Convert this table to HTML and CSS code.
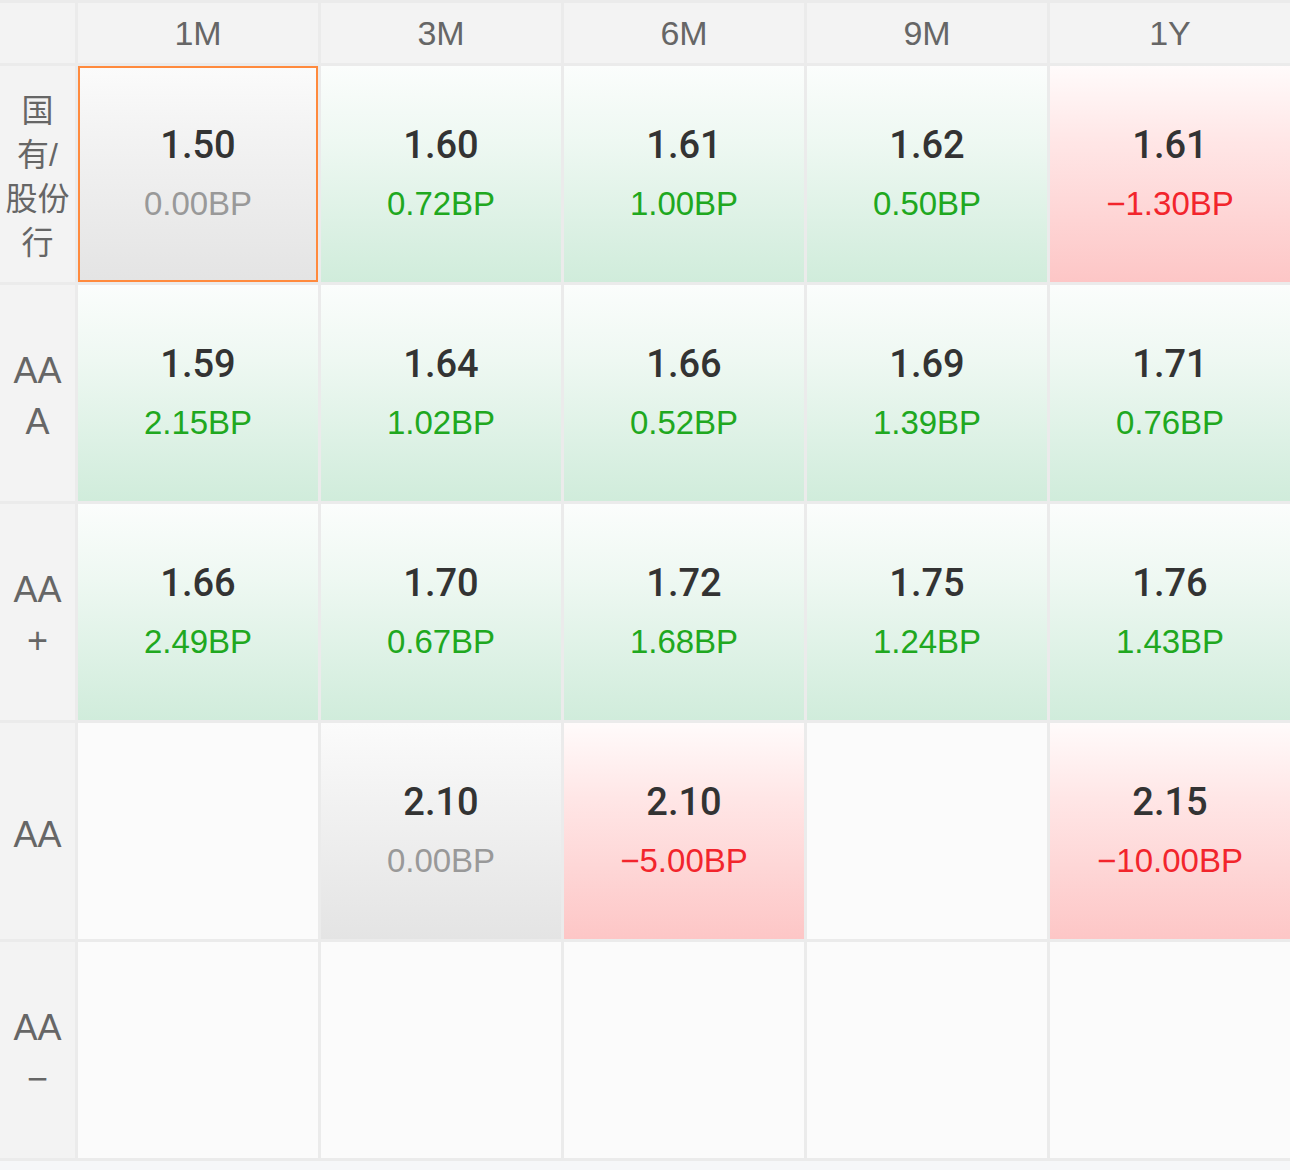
FILE: index.html
```html
<!DOCTYPE html>
<html lang="zh-CN">
  <head>
    <meta charset="UTF-8" />
    <title>收益率矩阵</title>
    <link rel="stylesheet" href="styles.css">
  </head>
  <body>
    <div class="matrix">
      <div class="corner"></div>
      <div class="col-head">1M</div>
      <div class="col-head">3M</div>
      <div class="col-head">6M</div>
      <div class="col-head">9M</div>
      <div class="col-head">1Y</div>

      <div class="row-head cjk">国<br />有/<br />股份<br />行</div>
      <div class="cell flat selected"><span class="rate">1.50</span><span class="bp">0.00BP</span></div>
      <div class="cell up"><span class="rate">1.60</span><span class="bp">0.72BP</span></div>
      <div class="cell up"><span class="rate">1.61</span><span class="bp">1.00BP</span></div>
      <div class="cell up"><span class="rate">1.62</span><span class="bp">0.50BP</span></div>
      <div class="cell down"><span class="rate">1.61</span><span class="bp">−1.30BP</span></div>

      <div class="row-head">AA<br />A</div>
      <div class="cell up"><span class="rate">1.59</span><span class="bp">2.15BP</span></div>
      <div class="cell up"><span class="rate">1.64</span><span class="bp">1.02BP</span></div>
      <div class="cell up"><span class="rate">1.66</span><span class="bp">0.52BP</span></div>
      <div class="cell up"><span class="rate">1.69</span><span class="bp">1.39BP</span></div>
      <div class="cell up"><span class="rate">1.71</span><span class="bp">0.76BP</span></div>

      <div class="row-head">AA<br />+</div>
      <div class="cell up"><span class="rate">1.66</span><span class="bp">2.49BP</span></div>
      <div class="cell up"><span class="rate">1.70</span><span class="bp">0.67BP</span></div>
      <div class="cell up"><span class="rate">1.72</span><span class="bp">1.68BP</span></div>
      <div class="cell up"><span class="rate">1.75</span><span class="bp">1.24BP</span></div>
      <div class="cell up"><span class="rate">1.76</span><span class="bp">1.43BP</span></div>

      <div class="row-head">AA</div>
      <div class="cell"></div>
      <div class="cell flat"><span class="rate">2.10</span><span class="bp">0.00BP</span></div>
      <div class="cell down"><span class="rate">2.10</span><span class="bp">−5.00BP</span></div>
      <div class="cell"></div>
      <div class="cell down"><span class="rate">2.15</span><span class="bp">−10.00BP</span></div>

      <div class="row-head">AA<br />−</div>
      <div class="cell"></div>
      <div class="cell"></div>
      <div class="cell"></div>
      <div class="cell"></div>
      <div class="cell"></div>
    </div>
  </body>
</html>
```

FILE: styles.css
```css
body {
  margin: 0;
  background: #f6f7f9;
  font-family: "Liberation Sans", "Noto Sans CJK SC", sans-serif;
}
.matrix {
  display: grid;
  grid-template-columns: 75px repeat(5, 240px);
  grid-template-rows: 60px repeat(5, 216px);
  gap: 3px;
  padding: 3px 0;
  background: #ebebeb;
}
.corner,
.col-head,
.row-head {
  background: #f3f3f3;
  color: #666;
}
.col-head {
  display: flex;
  justify-content: center;
  align-items: center;
  font-size: 34px;
}
.row-head {
  display: flex;
  justify-content: center;
  align-items: center;
  text-align: center;
  font-size: 36px;
  line-height: 51px;
  padding-top: 6px;
}
.row-head.cjk {
  font-size: 32px;
  line-height: 44px;
  padding-top: 6px;
}
.cell {
  display: flex;
  flex-direction: column;
  justify-content: center;
  align-items: center;
  background: #fbfbfb;
  box-sizing: border-box;
}
.cell.up {
  background: linear-gradient(to bottom, #fbfdfc 0%, #eef8f2 35%, #d0ecdb 100%);
}
.cell.down {
  background: linear-gradient(to bottom, #fffbfb 0%, #ffe6e6 35%, #fdc6c6 100%);
}
.cell.flat {
  background: linear-gradient(to bottom, #fbfbfb 0%, #f2f2f2 35%, #e4e4e4 100%);
}
.cell.selected {
  border: 2px solid #ff8a3d;
}
.rate {
  font-family: Roboto, "Liberation Sans", sans-serif;
  font-size: 38px;
  font-weight: 500;
  color: #333;
  line-height: 44px;
}
.bp {
  font-size: 33px;
  line-height: 44px;
  margin-top: 15px;
  color: #999;
}
.up .bp {
  color: #20a820;
}
.down .bp {
  color: #f2252c;
}
```
